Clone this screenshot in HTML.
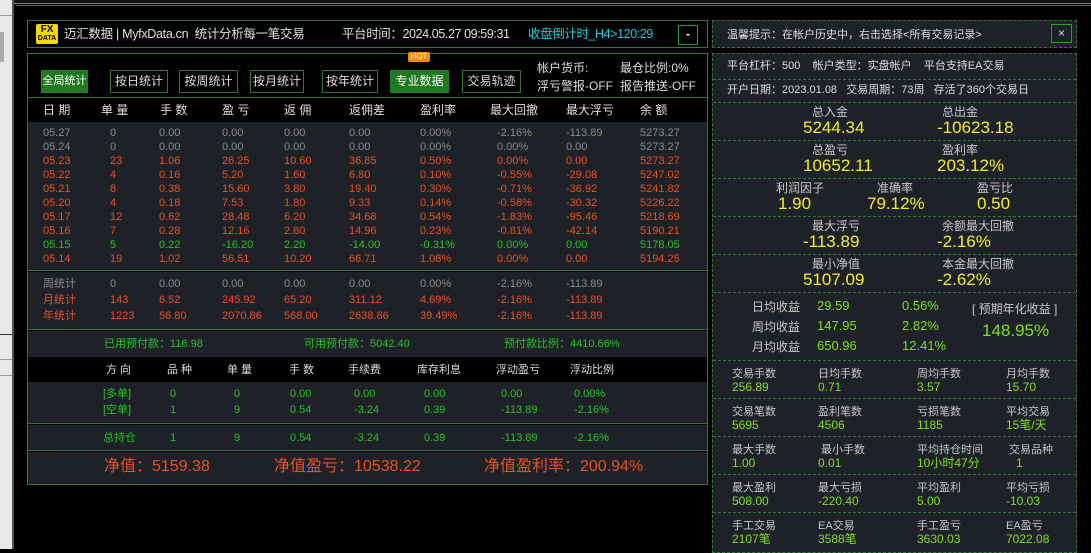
<!DOCTYPE html>
<html><head><meta charset="utf-8"><style>
*{margin:0;padding:0;box-sizing:border-box}
body{width:1091px;height:549px;background:#000;position:relative;overflow:hidden;font-family:"Liberation Sans","Noto Sans CJK SC",sans-serif;font-size:12px;color:#ddd}
.a{position:absolute;white-space:nowrap;line-height:14px}
.box{position:absolute;border:1px solid #2f7a2f}
.btn{position:absolute;top:70px;height:23px;border:1px solid #2f7a2f;color:#ddd;font-size:12px;text-align:center;line-height:21px;background:#000;white-space:nowrap;overflow:hidden}
.btn.on{background:#1e7a1e;color:#fff}
.g{color:#8a8a8a}.r{color:#e8501f}.gr{color:#22c422}
.dl{position:absolute;left:713px;width:363px;border-top:1px dashed #2f7a2f}
.lb{color:#c8c8c8}.yv{color:#f0f020;font-size:17px;line-height:20px}.lv{color:#7fe01a;font-size:13px}
</style></head><body>
<div class="a" style="left:0;top:0;width:12px;height:549px;background:#e8e8e8"></div>
<div class="a" style="left:0;top:15px;width:12px;height:1px;background:#999"></div>
<div class="a" style="left:0;top:32px;width:4px;height:30px;background:#aaa"></div>
<div class="a" style="left:0;top:334px;width:12px;height:1px;background:#333"></div>
<div class="a" style="left:0;top:359px;width:12px;height:1px;background:#999"></div>
<div class="a" style="left:0;top:375px;width:12px;height:1px;background:#999"></div>
<div class="a" style="left:12px;top:0;width:2px;height:549px;background:#555"></div>
<div class="a" style="left:14px;top:0;width:1077px;height:4px;background:#111;border-bottom:1px solid #888"></div>
<div class="a" style="left:16px;top:5px;width:1075px;height:1px;background:#666"></div>

<!-- header -->
<div class="box" style="left:27px;top:20px;width:681px;height:28px"></div>
<div class="a" style="left:36px;top:24px;width:22px;height:20px;background:#f5d800;border-radius:2px;color:#000;font-weight:bold;font-size:10px;line-height:8px;text-align:center;padding-top:2px">FX<br><span style="font-size:7px">DATA</span></div>
<div class="a" style="left:64px;top:27px;font-size:12.5px;color:#e0e0e0;letter-spacing:-0.3px">迈汇数据 | MyfxData.cn&nbsp; 统计分析每一笔交易</div>
<div class="a" style="left:342px;top:27px;font-size:12.5px;color:#e0e0e0;letter-spacing:-0.4px">平台时间：2024.05.27 09:59:31</div>
<div class="a" style="left:528px;top:27px;font-size:12.5px;color:#1ec8d8;letter-spacing:-0.4px">收盘倒计时_H4&gt;120:29</div>
<div class="a" style="left:678px;top:25px;width:20px;height:20px;border:1px solid #2f9a2f;color:#fff;text-align:center;line-height:17px;font-weight:bold">-</div>

<!-- main box -->
<div class="box" style="left:27px;top:53px;width:681px;height:432px"></div>
<div class="btn on" style="left:41px;width:47px;font-size:11px">全局统计</div>
<div class="btn" style="left:110px;width:58px">按日统计</div>
<div class="btn" style="left:179px;width:59px">按周统计</div>
<div class="btn" style="left:250px;width:54px">按月统计</div>
<div class="btn" style="left:322px;width:56px">按年统计</div>
<div class="btn on" style="left:390px;width:59px">专业数据</div>
<div class="btn" style="left:462px;width:59px">交易轨迹</div>
<div class="a" style="left:408px;top:52px;width:22px;height:10px;background:#f08a10;color:#fff;font-size:8px;line-height:10px;text-align:center;border-radius:2px">HOT</div>
<div class="a" style="left:537px;top:61px;color:#ddd">帐户货币:</div>
<div class="a" style="left:620px;top:61px;color:#ddd">最仓比例:0%</div>
<div class="a" style="left:537px;top:79px;color:#ddd">浮亏警报-OFF</div>
<div class="a" style="left:620px;top:79px;color:#ddd">报告推送-OFF</div>

<div class="a" style="left:28px;top:97px;width:679px;height:25px;background:#000;border-top:1px solid #2f7a2f"></div>
<div class="a" style="left:28px;top:122px;width:679px;height:149px;background:#1f2129;border-bottom:1px solid #2f7a2f"></div>
<div class="a" style="left:28px;top:272px;width:679px;height:58px;background:#1f2129;border-bottom:1px solid #2f7a2f"></div>
<div class="a" style="left:28px;top:331px;width:679px;height:26px;background:#1f2129"></div>
<div class="a" style="left:28px;top:382px;width:679px;height:42px;background:#1f2129;border-bottom:1px solid #2f7a2f"></div>
<div class="a" style="left:28px;top:425px;width:679px;height:26px;background:#1f2129;border-bottom:1px solid #2f7a2f"></div>
<div class="a" style="left:28px;top:452px;width:679px;height:32px;background:#1f2129"></div>

<div id="t"></div>
<script>
var cols=[43,101,160,222,284,349,420,490,566,640];
var H=["日 期","单 量","手 数","盈 亏","返 佣","返佣差","盈利率","最大回撤","最大浮亏","余 额"];
var s="";
H.forEach(function(h,i){s+='<div class="a" style="left:'+cols[i]+'px;top:103px;font-size:12px;color:#ddd">'+h+'</div>';});
var R=[["g","05.27","0","0.00","0.00","0.00","0.00","0.00%","-2.16%","-113.89","5273.27"],
["g","05.24","0","0.00","0.00","0.00","0.00","0.00%","0.00%","0.00","5273.27"],
["r","05.23","23","1.06","26.25","10.60","36.85","0.50%","0.00%","0.00","5273.27"],
["r","05.22","4","0.16","5.20","1.60","6.80","0.10%","-0.55%","-29.08","5247.02"],
["r","05.21","8","0.38","15.60","3.80","19.40","0.30%","-0.71%","-36.92","5241.82"],
["r","05.20","4","0.18","7.53","1.80","9.33","0.14%","-0.58%","-30.32","5226.22"],
["r","05.17","12","0.62","28.48","6.20","34.68","0.54%","-1.83%","-95.46","5218.69"],
["r","05.16","7","0.28","12.16","2.80","14.96","0.23%","-0.81%","-42.14","5190.21"],
["gr","05.15","5","0.22","-16.20","2.20","-14.00","-0.31%","0.00%","0.00","5178.05"],
["r","05.14","19","1.02","56.51","10.20","66.71","1.08%","0.00%","0.00","5194.25"]];
var dc=[43,110,159,222,284,349,420,497,566,640];
R.forEach(function(r,j){for(var i=1;i<r.length;i++)s+='<div class="a '+r[0]+'" style="left:'+dc[i-1]+'px;top:'+(126+j*14)+'px;font-size:11px">'+r[i]+'</div>';});
var S=[["g","周统计","0","0.00","0.00","0.00","0.00","0.00%","-2.16%","-113.89"],
["r","月统计","143","6.52","245.92","65.20","311.12","4.69%","-2.16%","-113.89"],
["r","年统计","1223","56.80","2070.86","568.00","2638.86","39.49%","-2.16%","-113.89"]];
S.forEach(function(r,j){for(var i=1;i<r.length;i++)s+='<div class="a '+r[0]+'" style="left:'+dc[i-1]+'px;top:'+(277+j*16)+'px;font-size:11px">'+r[i]+'</div>';});
s+='<div class="a gr" style="left:104px;top:337px;font-size:11px">已用预付款：116.98</div>';
s+='<div class="a gr" style="left:304px;top:337px;font-size:11px">可用预付款：5042.40</div>';
s+='<div class="a gr" style="left:504px;top:337px;font-size:11px">预付款比例：4410.66%</div>';
var pc=[106,167,227,289,348,417,496,570];
["方 向","品 种","单 量","手 数","手续费","库存利息","浮动盈亏","浮动比例"].forEach(function(h,i){s+='<div class="a" style="left:'+pc[i]+'px;top:363px;color:#ddd;font-size:11px">'+h+'</div>';});
var pv=[103,170,234,290,354,424,501,574];
[["[多单]","0","0","0.00","0.00","0.00","0.00","0.00%"],["[空单]","1","9","0.54","-3.24","0.39","-113.89","-2.16%"]].forEach(function(r,j){r.forEach(function(v,i){s+='<div class="a gr" style="left:'+pv[i]+'px;top:'+(387+j*16)+'px;font-size:11px">'+v+'</div>';});});
["总持仓","1","9","0.54","-3.24","0.39","-113.89","-2.16%"].forEach(function(v,i){s+='<div class="a gr" style="left:'+pv[i]+'px;top:431px;font-size:11px">'+v+'</div>';});
s+='<div class="a r" style="left:104px;top:458px;font-size:16px;line-height:18px">净值：5159.38</div>';
s+='<div class="a r" style="left:274px;top:458px;font-size:16px;line-height:18px">净值盈亏：10538.22</div>';
s+='<div class="a r" style="left:484px;top:458px;font-size:16px;line-height:18px">净值盈利率：200.94%</div>';

// right panel
s+='<div class="a" style="left:712px;top:20px;width:365px;height:28px;background:#1f2129;border:1px dashed #2f7a2f"></div>';
s+='<div class="a" style="left:727px;top:28px;font-size:11px;color:#ddd">温馨提示：在帐户历史中，右击选择&lt;所有交易记录&gt;</div>';
s+='<div class="a" style="left:1051px;top:24px;width:21px;height:19px;border:1px solid #2f9a2f;color:#ddd;text-align:center;line-height:17px;font-size:12px">×</div>';
s+='<div class="a" style="left:712px;top:53px;width:365px;height:500px;background:#1f2129;border:1px dashed #2f7a2f"></div>';
[79,102,140,178,216,254,292,360,398,436,474,512].forEach(function(y){s+='<div class="dl" style="top:'+y+'px"></div>';});
s+='<div class="a" style="left:727px;top:59px;font-size:11px;color:#ddd">平台杠杆：500 &nbsp;&nbsp; 帐户类型：实盘帐户 &nbsp;&nbsp; 平台支持EA交易</div>';
s+='<div class="a" style="left:727px;top:83px;font-size:11px;color:#ddd">开户日期：2023.01.08 &nbsp; 交易周期：73周 &nbsp; 存活了360个交易日</div>';
function c2(y,l1,v1,l2,v2){s+='<div class="a lb" style="left:812px;top:'+y+'px">'+l1+'</div><div class="a yv" style="left:803px;top:'+(y+13)+'px">'+v1+'</div><div class="a lb" style="left:942px;top:'+y+'px">'+l2+'</div><div class="a yv" style="left:937px;top:'+(y+13)+'px">'+v2+'</div>';}
c2(105,"总入金","5244.34","总出金","-10623.18");
c2(143,"总盈亏","10652.11","盈利率","203.12%");
s+='<div class="a lb" style="left:776px;top:181px">利润因子</div><div class="a yv" style="left:778px;top:194px">1.90</div>';
s+='<div class="a lb" style="left:877px;top:181px">准确率</div><div class="a yv" style="left:867px;top:194px">79.12%</div>';
s+='<div class="a lb" style="left:977px;top:181px">盈亏比</div><div class="a yv" style="left:977px;top:194px">0.50</div>';
c2(219,"最大浮亏","-113.89","余额最大回撤","-2.16%");
c2(257,"最小净值","5107.09","本金最大回撤","-2.62%");
[["日均收益","29.59","0.56%"],["周均收益","147.95","2.82%"],["月均收益","650.96","12.41%"]].forEach(function(r,j){var y=300+j*20;s+='<div class="a lb" style="left:752px;top:'+y+'px">'+r[0]+'</div><div class="a lv" style="left:817px;top:'+(y-1)+'px">'+r[1]+'</div><div class="a lv" style="left:902px;top:'+(y-1)+'px">'+r[2]+'</div>';});
s+='<div class="a lb" style="left:972px;top:302px">[ 预期年化收益 ]</div><div class="a" style="left:982px;top:321px;color:#7fe01a;font-size:17px;line-height:20px">148.95%</div>';
var qc=[732,818,917,1006];
[[[ "交易手数","256.89"],["日均手数","0.71"],["周均手数","3.57"],["月均手数","15.70"]],
[["交易笔数","5695"],["盈利笔数","4506"],["亏损笔数","1185"],["平均交易","15笔/天"]],
[["最大手数","1.00"],[" 最小手数","0.01"],["平均持仓时间","10小时47分"],[" 交易品种","&nbsp;&nbsp;&nbsp;1"]],
[["最大盈利","508.00"],["最大亏损","-220.40"],["平均盈利","5.00"],["平均亏损","-10.03"]],
[["手工交易","2107笔"],["EA交易","3588笔"],["手工盈亏","3630.03"],["EA盈亏","7022.08"]]].forEach(function(row,j){var y=367+j*38;row.forEach(function(c,i){s+='<div class="a lb" style="left:'+qc[i]+'px;top:'+y+'px;font-size:11px;white-space:pre">'+c[0]+'</div><div class="a lv" style="left:'+qc[i]+'px;top:'+(y+13)+'px;font-size:12px">'+c[1]+'</div>';});});
document.getElementById("t").innerHTML=s;
</script>
</body></html>
